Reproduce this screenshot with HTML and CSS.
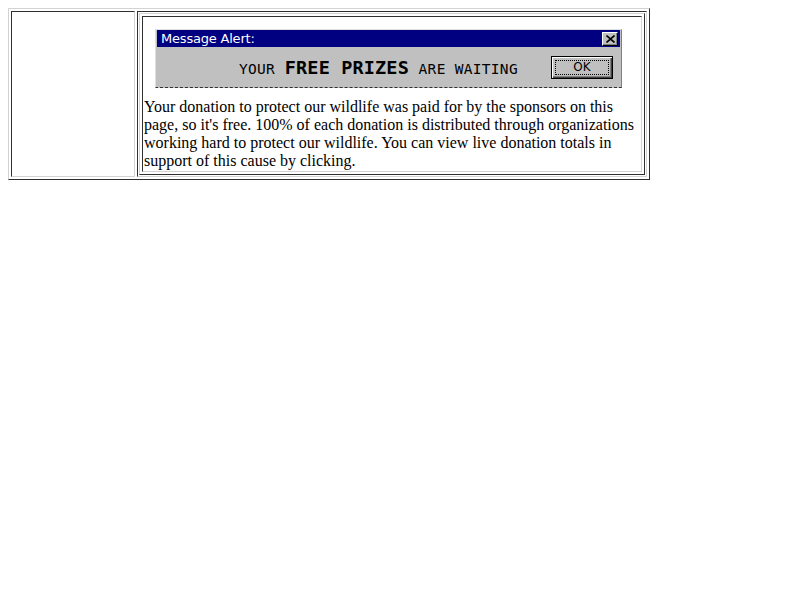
FILE: index.html
```html
<!DOCTYPE html>
<html>
<head>
<meta charset="utf-8">
<link rel="stylesheet" href="styles.css">
</head>
<body>
<table class="outer">
  <tr>
    <td class="side"></td>
    <td class="main">
      <table class="inner">
        <tr>
          <td class="content">
            <div class="banner">
              <div class="dlg">
                <div class="titlebar">
                  <span class="title">Message Alert:</span>
                  <span class="close">
                    <svg width="9" height="8" viewBox="0 0 9 8"><path d="M0.5 0.5 L8.5 7.5 M8.5 0.5 L0.5 7.5" stroke="#000" stroke-width="1.6" fill="none"/></svg>
                  </span>
                </div>
                <div class="dbody">
                  <span class="msg"><span class="sm">YOUR</span> <span class="big">FREE PRIZES</span> <span class="sm">ARE WAITING</span></span>
                  <span class="okbtn"><span class="okfocus">OK</span></span>
                </div>
              </div>
            </div>
            <p class="copy">Your donation to protect our wildlife was paid for by the sponsors on this page, so it's free. 100% of each donation is distributed through organizations working hard to protect our wildlife. You can view live donation totals in support of this cause by clicking.</p>
          </td>
        </tr>
      </table>
    </td>
  </tr>
</table>
</body>
</html>
```

FILE: styles.css
```css
html, body {
  background: #fff;
}
body {
  margin: 8px;
  font-family: "Liberation Serif", "Times New Roman", serif;
  font-size: 16px;
  color: #000;
}
table {
  border-collapse: separate;
  border-spacing: 2px;
  border: 1px solid;
  border-color: #d3d3d3 #2f2f2f #2f2f2f #d3d3d3;
}
td {
  border: 1px solid;
  border-color: #2f2f2f #d3d3d3 #d3d3d3 #2f2f2f;
  padding: 1px;
  vertical-align: middle;
}
.outer {
  width: 642px;
}
.side {
  width: 120px;
}
.inner {
  width: 100%;
}
.content {
  padding: 1px;
}
.banner {
  display: block;
  width: 468px;
  height: 60px;
  margin: 10px;
  box-sizing: border-box;
  padding: 1px 0 0 1px;
}
.dlg {
  height: 59px;
  box-sizing: border-box;
  background: #c0c0c0;
  border-top: 1px solid #dfdfdf;
  border-left: 1px solid #dfdfdf;
  border-right: 1px solid #808080;
  border-bottom: 1px dashed #303030;
  padding: 0 1px 0 1px;
  display: flex;
  flex-direction: column;
}
.titlebar {
  height: 17px;
  background: #000080;
  display: flex;
  align-items: center;
  padding: 0 2px 0 4px;
}
.title {
  color: #fff;
  font-family: "DejaVu Sans", Verdana, sans-serif;
  font-size: 13px;
  letter-spacing: -0.2px;
  flex: 1;
  line-height: 17px;
}
.close {
  width: 14px;
  height: 12px;
  background: #c0c0c0;
  border-top: 1px solid #fff;
  border-left: 1px solid #fff;
  border-right: 1px solid #000;
  border-bottom: 1px solid #000;
  box-shadow: inset -1px -1px 0 #808080;
  display: flex;
  align-items: center;
  justify-content: center;
}
.close svg {
  display: block;
}
.dbody {
  flex: 1;
  display: flex;
  align-items: center;
}
.msg {
  margin-left: 82px;
  font-family: "DejaVu Sans Mono", monospace;
  color: #000;
  white-space: nowrap;
}
.sm {
  font-size: 14.5px;
  letter-spacing: 0.3px;
}
.big {
  font-size: 18.5px;
  font-weight: bold;
  letter-spacing: 0.15px;
}
.okbtn {
  margin-left: auto;
  margin-right: 7px;
  width: 62px;
  height: 23px;
  box-sizing: border-box;
  border: 1px solid #000;
  background: #c0c0c0;
  box-shadow: inset 1px 1px 0 #fff, inset -1px -1px 0 #404040, inset -2px -2px 0 #808080;
  padding: 3px;
  display: flex;
}
.okfocus {
  flex: 1;
  border: 1px dotted #000;
  font-family: "DejaVu Sans", Verdana, sans-serif;
  font-size: 12px;
  display: flex;
  align-items: center;
  justify-content: center;
  color: #000;
}
.copy {
  margin: 0;
  line-height: normal;
}
```
